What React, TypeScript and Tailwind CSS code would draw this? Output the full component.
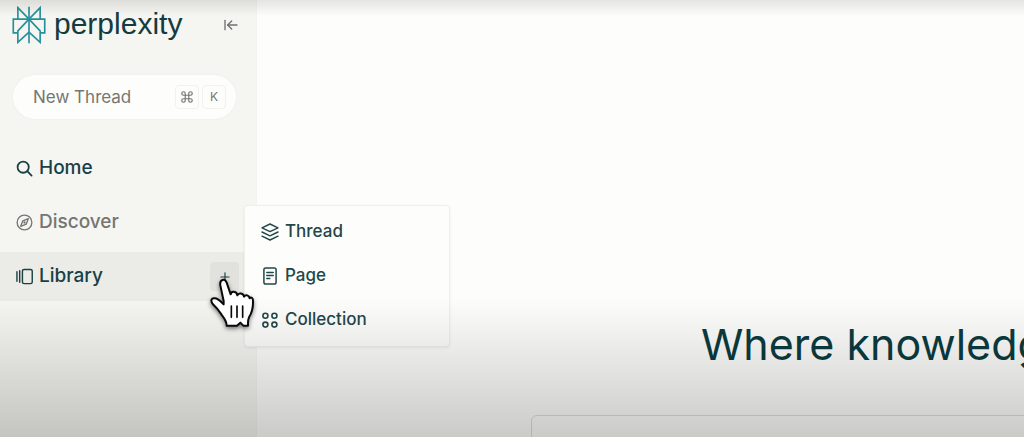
import React from 'react';
import { ArrowLeftToLine, Command, Plus } from 'lucide-react';

interface IconProps {
  className?: string;
}

const LogoMark = ({ className }: IconProps) => (
  <svg viewBox="0 0 102 116" fill="none" stroke="currentColor" strokeWidth="5" className={className}>
    <path d="M51 2v112" />
    <path d="M51 40L17 5v35M51 40L85 5v35" />
    <path d="M17 82H3V40h96v42H85" />
    <path d="M51 40L17 76v35l34-31M51 40l34 36v35L51 80" />
  </svg>
);

const SearchIcon = ({ className }: IconProps) => (
  <svg viewBox="0 0 18 18" fill="none" stroke="currentColor" strokeWidth="1.9" className={className}>
    <circle cx="7.6" cy="7.6" r="5.9" />
    <path d="M11.9 11.9l4.6 4.6" strokeLinecap="round" />
  </svg>
);

const DiscoverIcon = ({ className }: IconProps) => (
  <svg viewBox="0 0 18 18" fill="none" stroke="currentColor" strokeWidth="1.4" className={className}>
    <circle cx="9" cy="9" r="7.8" />
    <path d="M13 5l-2.2 5.8L5 13l2.2-5.8z" strokeLinejoin="round" />
    <circle cx="9" cy="9" r="1.2" fill="currentColor" stroke="none" />
  </svg>
);

const LibraryIcon = ({ className }: IconProps) => (
  <svg viewBox="0 0 18 18" fill="none" stroke="currentColor" strokeWidth="1.5" className={className}>
    <path d="M1 4v10M3.9 2.8v12.4" strokeLinecap="round" />
    <rect x="6.8" y="1.5" width="10.4" height="15" rx="1.8" />
  </svg>
);

const ThreadIcon = ({ className }: IconProps) => (
  <svg
    viewBox="0 0 18 18"
    fill="none"
    stroke="currentColor"
    strokeWidth="1.4"
    strokeLinejoin="round"
    strokeLinecap="round"
    className={className}
  >
    <path d="M9 1l8 3.8-8 3.8-8-3.8z" />
    <path d="M1 9l8 3.8L17 9" />
    <path d="M1 13.2L9 17l8-3.8" />
  </svg>
);

const PageIcon = ({ className }: IconProps) => (
  <svg viewBox="0 0 18 18" fill="none" stroke="currentColor" strokeWidth="1.5" className={className}>
    <rect x="2.9" y="1" width="12.2" height="16" rx="1.8" />
    <path d="M5.8 5.6h6.4M5.8 8.6h6.4M5.8 11.6h3" strokeLinecap="round" />
  </svg>
);

const CollectionIcon = ({ className }: IconProps) => (
  <svg viewBox="0 0 18 18" fill="none" stroke="currentColor" strokeWidth="1.6" className={className}>
    <circle cx="4.4" cy="4.8" r="2.5" />
    <circle cx="13.4" cy="4.8" r="2.5" />
    <circle cx="4.4" cy="13.6" r="2.5" />
    <circle cx="13.4" cy="13.6" r="2.5" />
  </svg>
);

const HandPointer = ({ className }: IconProps) => (
  <svg viewBox="0 0 132 144" className={className}>
    <path
      d="M49 67L39 20C36 2 52-2 58 12L70 47C72 36 88 37 90 50C94 41 108 43 110 54C115 46 125 50 127 59C131 53 137 58 137 66C138 90 134 102 125 116C121 124 122 132 122 141H108L99 132L89 141H58C58 128 52 120 44 110C36 98 31 90 17 77C8 67 12 56 24 59C34 61 40 68 49 77Z"
      transform="translate(-8 2)"
      fill="#fff"
      stroke="#0a0a0a"
      strokeWidth="6"
      strokeLinejoin="round"
    />
    <path d="M64 84v34M81 84v34M98 84v34" stroke="#0a0a0a" strokeWidth="5" strokeLinecap="round" />
  </svg>
);

const menuItems = [
  { label: 'Thread', icon: ThreadIcon },
  { label: 'Page', icon: PageIcon },
  { label: 'Collection', icon: CollectionIcon },
];

const LibraryMenu = () => (
  <div className="absolute left-[244px] -top-[47px] z-10 w-[206px] rounded border border-[#f0f0ed] bg-[#fdfdfb] py-1 shadow-[0_1px_3px_rgba(0,0,0,0.07)]">
    {menuItems.map(({ label, icon: Icon }) => (
      <button key={label} className="flex h-11 w-full items-center gap-1.5 px-4 text-[17px] font-medium text-[#234749]">
        <Icon className="h-[18px] w-[18px]" />
        {label}
      </button>
    ))}
  </div>
);

const Sidebar = () => (
  <aside className="relative w-64 shrink-0 bg-[#f5f5f1]">
    <div className="flex h-[50px] items-center pl-3 pr-[17px]">
      <a href="#" className="flex items-center gap-2 text-[30px] text-[#143c40]">
        <LogoMark className="h-[38px] w-[34px] text-[#25909a]" />
        <span className="pb-0.5 font-['Liberation_Sans',sans-serif] leading-9">perplexity</span>
      </a>
      <button aria-label="Collapse sidebar" className="ml-auto text-[#6f716f]">
        <ArrowLeftToLine className="h-4 w-4" strokeWidth={2} />
      </button>
    </div>

    <button className="ml-[13px] mt-[25px] flex h-11 w-[223px] items-center rounded-full bg-[#fdfdfb] pl-5 pr-2.5 text-[17px] text-[#747673] shadow-[0_0_2px_#e9e9e5]">
      <span className="pt-0.5">New Thread</span>
      <span className="ml-auto flex gap-[3px] text-xs">
        <kbd className="flex h-6 w-6 items-center justify-center rounded border border-[#f1f1ee]">
          <Command className="h-3.5 w-3.5" />
        </kbd>
        <kbd className="flex h-6 w-6 items-center justify-center rounded border border-[#f1f1ee] font-['Inter',sans-serif]">
          K
        </kbd>
      </span>
    </button>

    <nav className="mt-[25px] flex flex-col gap-[5px] text-[19px] font-medium text-[#1a4044]">
      <a href="#" className="flex h-[49px] items-center gap-1.5 pl-4">
        <SearchIcon className="h-[17px] w-[17px]" />
        Home
      </a>
      <a href="#" className="flex h-[49px] items-center gap-1.5 pl-4 text-[#747673]">
        <DiscoverIcon className="h-[17px] w-[17px]" />
        Discover
      </a>
      <div className="relative flex h-[49px] items-center bg-[#ebebe8]">
        <a href="#" className="flex items-center gap-1.5 pl-4">
          <LibraryIcon className="h-[17px] w-[17px]" />
          Library
        </a>
        <button
          aria-label="Add to library"
          className="ml-auto mr-[17px] flex h-[29px] w-[29px] items-center justify-center rounded-sm bg-[#e1e1de]"
        >
          <Plus className="h-3.5 w-3.5" strokeWidth={2} />
        </button>
        <LibraryMenu />
      </div>
    </nav>
  </aside>
);

const App = () => (
  <div className="relative flex h-screen overflow-hidden bg-[#fdfdfb] font-['Inter',sans-serif]">
    <Sidebar />
    <main className="min-w-0 flex-1 overflow-hidden border-l border-[#f3f3f0] pl-[274px]">
      <h1 className="mt-[319px] whitespace-nowrap pl-[170px] text-[43px] leading-[50px] text-[#0b3b40]">
        Where knowledge begins
      </h1>
      <textarea
        aria-label="Ask anything"
        className="mt-[46px] block h-32 w-[848px] resize-none rounded-md border border-[#dddddb] bg-transparent"
      />
    </main>

    {/* edge shading */}
    <div className="pointer-events-none absolute inset-x-0 top-0 z-20 h-4 bg-linear-to-b from-black/10 to-transparent" />
    <div className="pointer-events-none absolute inset-x-0 bottom-0 z-20 h-[140px] bg-linear-to-b from-transparent to-black/20" />
    <HandPointer className="pointer-events-none absolute left-[210px] top-[278px] z-30 h-[48px] w-[44px] overflow-visible drop-shadow-[0_2px_2px_rgba(0,0,0,0.5)]" />
  </div>
);

export default App;
